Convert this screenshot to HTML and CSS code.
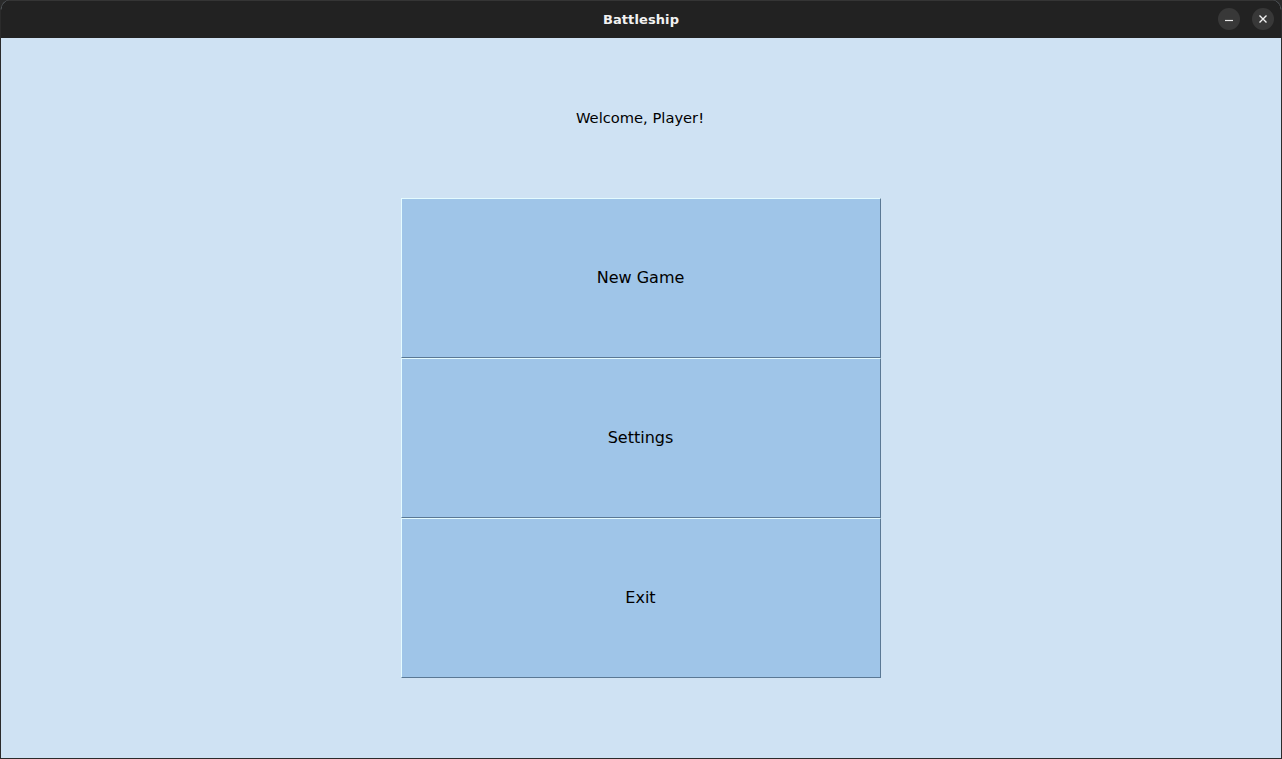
FILE: index.html
```html
<!DOCTYPE html>
<html>
<head>
<meta charset="utf-8">
<title>Battleship</title>
<link rel="stylesheet" href="styles.css">
</head>
<body>
<div class="window">
  <div class="titlebar">
    <span class="title">Battleship</span>
    <div class="controls">
      <span class="ctl"><svg width="22" height="22" viewBox="0 0 22 22"><line x1="7" y1="12.5" x2="15" y2="12.5" stroke="#e8e8e8" stroke-width="1.2"/></svg></span>
      <span class="ctl"><svg width="22" height="22" viewBox="0 0 22 22"><path d="M7.5 7.5 L14.5 14.5 M14.5 7.5 L7.5 14.5" stroke="#f0f0f0" stroke-width="1.4"/></svg></span>
    </div>
  </div>
  <div class="content">
    <div class="welcome">Welcome, Player!</div>
    <div class="menu">
      <div class="btn">New Game</div>
      <div class="btn">Settings</div>
      <div class="btn">Exit</div>
    </div>
  </div>
</div>
</body>
</html>
```
FILE: styles.css
```css
html, body {
  margin: 0;
  padding: 0;
  background: #2a2a2a;
}
.window {
  width: 1282px;
  height: 759px;
  box-sizing: border-box;
  border: 1px solid #2b2b2b;
  border-top: none;
  border-radius: 10px 10px 0 0;
  overflow: hidden;
  display: flex;
  flex-direction: column;
  background: #cfe2f3;
}
.titlebar {
  height: 38px;
  flex: none;
  box-sizing: border-box;
  background: #222222;
  border-top: 1px solid #353535;
  position: relative;
  display: flex;
  align-items: center;
  justify-content: center;
}
.title {
  color: #f2f2f2;
  font-family: "DejaVu Sans", sans-serif;
  font-weight: bold;
  font-size: 13px;
  letter-spacing: 0.1px;
}
.controls {
  position: absolute;
  right: 7px;
  top: 7px;
  display: flex;
  gap: 12px;
}
.ctl {
  width: 22px;
  height: 22px;
  border-radius: 50%;
  background: #383838;
  display: block;
}
.ctl svg { display: block; }
.content {
  flex: 1;
  display: flex;
  flex-direction: column;
  align-items: center;
  background: #cfe2f3;
}
.welcome {
  height: 160px;
  display: flex;
  align-items: center;
  justify-content: center;
  padding: 0 2px 2px 0;
  box-sizing: border-box;
  font-family: "DejaVu Sans", sans-serif;
  font-size: 14.7px;
  color: #000;
}
.menu {
  width: 480px;
  display: flex;
  flex-direction: column;
}
.btn {
  height: 160px;
  box-sizing: border-box;
  background: #9fc5e8;
  border-top: 1px solid #e4fbff;
  border-left: 1px solid #e4fbff;
  border-bottom: 1px solid #5a7894;
  border-right: 1px solid #5a7894;
  padding: 0 1px 2px 0;
  display: flex;
  align-items: center;
  justify-content: center;
  font-family: "DejaVu Sans", sans-serif;
  font-size: 16px;
  color: #000;
}
```
